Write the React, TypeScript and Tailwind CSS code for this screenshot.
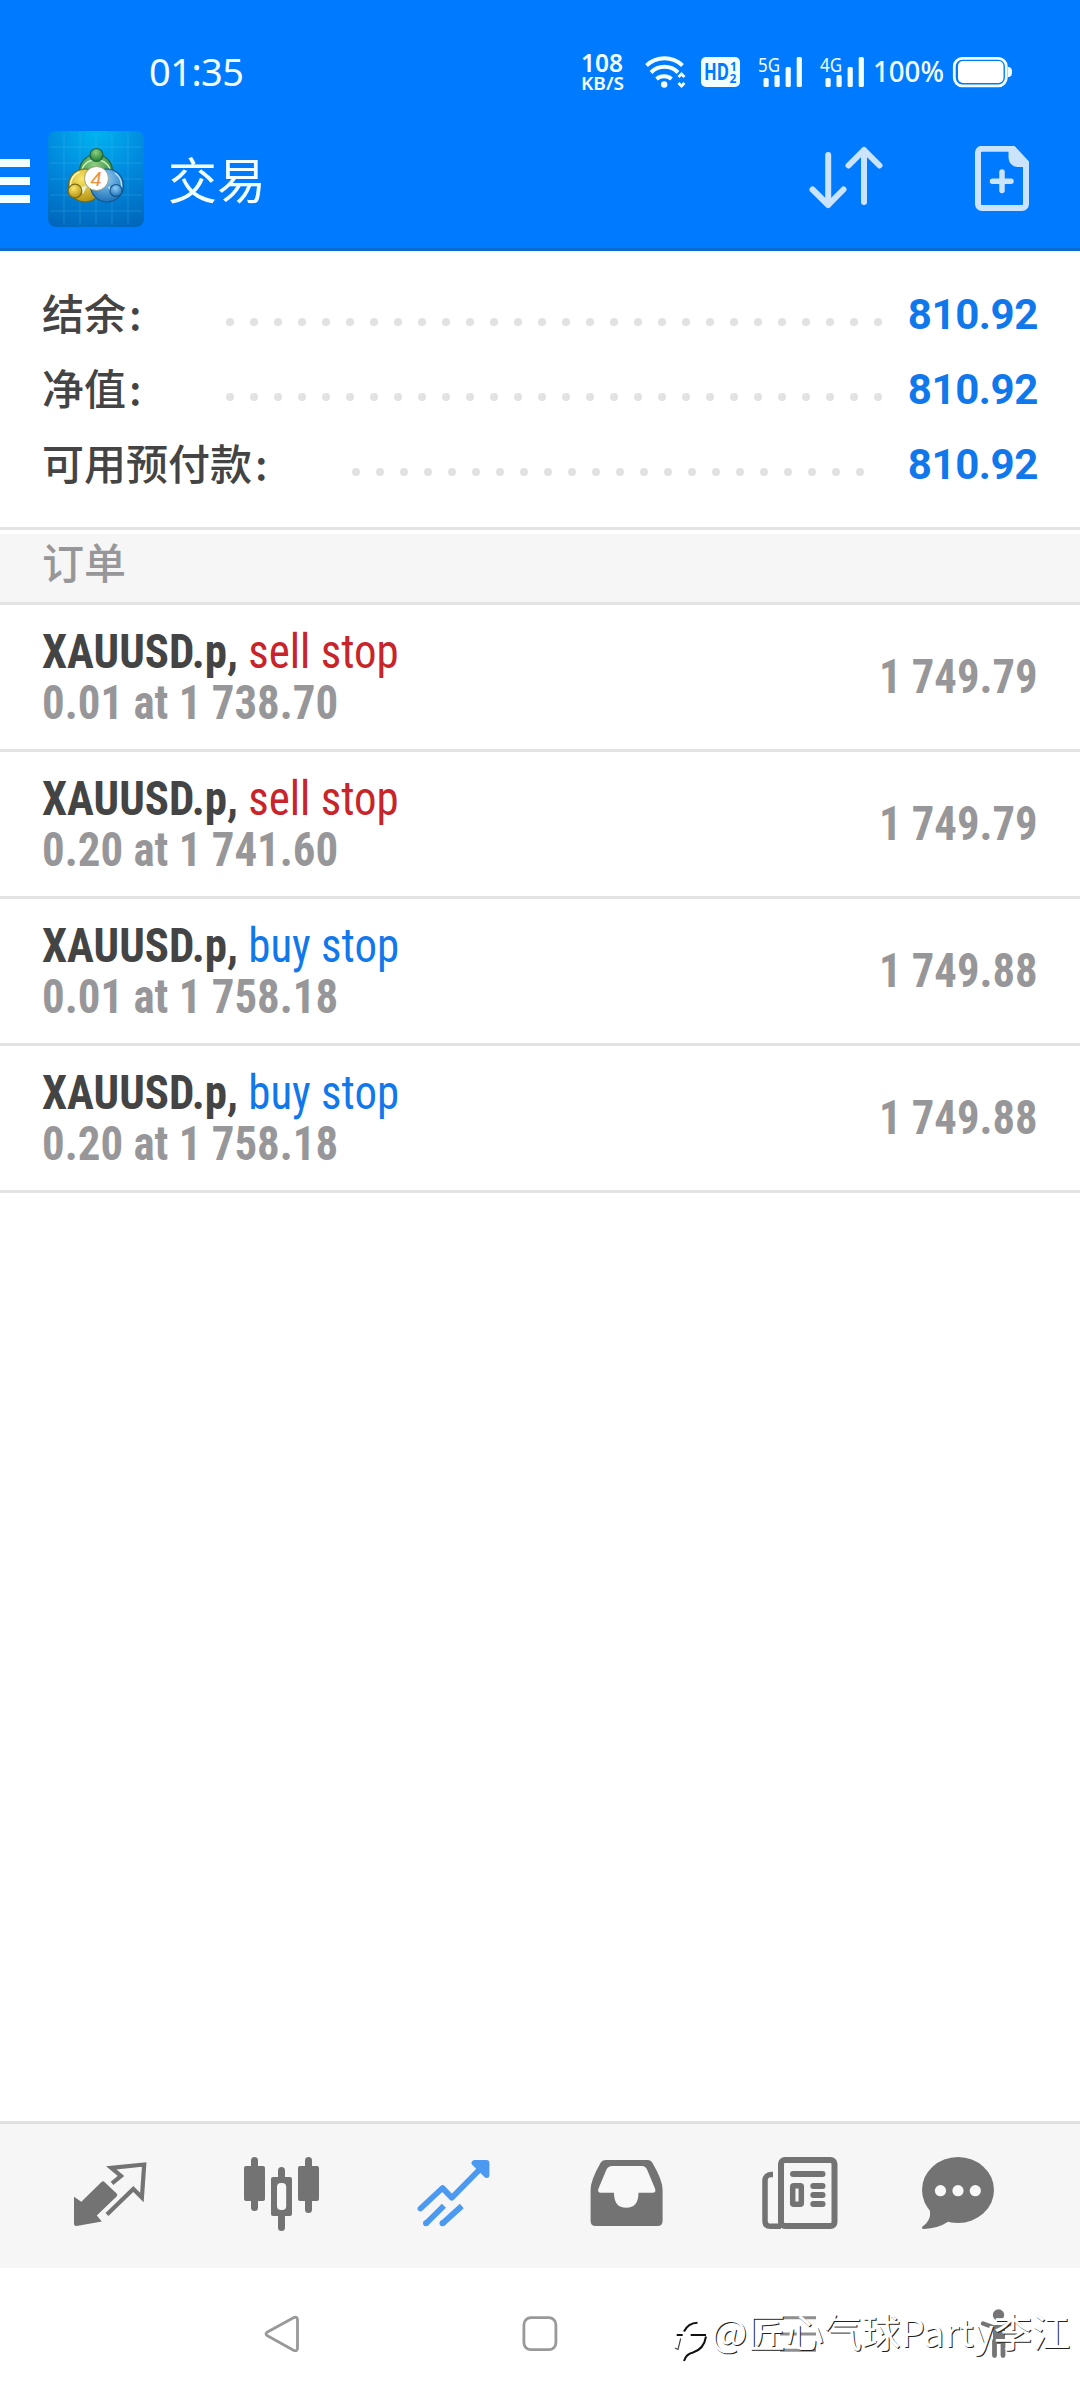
const summary = [
  { label: "结余", value: "810.92", dots: 28 },
  { label: "净值", value: "810.92", dots: 28 },
  { label: "可用预付款", value: "810.92", dots: 22 },
];

const orders = [
  { symbol: "XAUUSD.p,", type: "sell stop", detail: "0.01 at 1 738.70", price: "1 749.79" },
  { symbol: "XAUUSD.p,", type: "sell stop", detail: "0.20 at 1 741.60", price: "1 749.79" },
  { symbol: "XAUUSD.p,", type: "buy stop", detail: "0.01 at 1 758.18", price: "1 749.88" },
  { symbol: "XAUUSD.p,", type: "buy stop", detail: "0.20 at 1 758.18", price: "1 749.88" },
];

function Signal({ label }: { label: string }) {
  return (
    <svg className="overflow-visible" width="46" height="32" viewBox="0 0 46 32" fill="#f2ffff">
      <text x="0" y="16" fontSize="20" textLength="22" lengthAdjust="spacingAndGlyphs">{label}</text>
      <rect x="5.5" y="22" width="5.2" height="9" rx="1.5" />
      <rect x="16.5" y="19" width="5.2" height="12" rx="1.5" />
      <rect x="27.6" y="11" width="5.2" height="20" rx="1.5" />
      <rect x="38.7" y="1" width="5.2" height="30" rx="1.5" />
    </svg>
  );
}

function StatusBar() {
  return (
    <div className="flex h-[116px] pt-[54px] text-[#f2ffff] font-['Noto_Sans',sans-serif]">
      <svg className="ml-[149px] overflow-visible" width="100" height="36" fill="#f2ffff">
        <text x="0" y="31.5" fontSize="38" textLength="95" lengthAdjust="spacing">01:35</text>
      </svg>
      <svg className="ml-[332px] overflow-visible" width="44" height="40" fill="#f2ffff">
        <text x="0" y="18" fontSize="25" fontWeight="600" textLength="42" lengthAdjust="spacingAndGlyphs">108</text>
        <text x="0" y="36" fontSize="18.5" fontWeight="600" textLength="43" lengthAdjust="spacingAndGlyphs">KB/S</text>
      </svg>
      <svg className="ml-[20px] mt-[2px]" width="42" height="34" viewBox="0 0 42 34" fill="none" stroke="#f2ffff" strokeWidth="4">
        <path d="M1.5 9.5a26 26 0 0 1 36 0M6 16.5a19 19 0 0 1 27 0M11.5 23a11.5 11.5 0 0 1 15 0" />
        <circle cx="19.2" cy="28.5" r="3.2" fill="#f2ffff" stroke="none" />
        <path d="M33.500 21l3-3 3 3M33.500 27l3 3 3-3" strokeWidth="2.800" />
      </svg>
      <svg className="ml-[14px] mt-[2px] overflow-visible" width="40" height="32" viewBox="0 0 40 32">
        <rect x="0" y="1" width="39" height="30" rx="5" fill="#f2ffff" />
        <g fill="#007aff" fontWeight="700">
          <text x="3" y="24" fontSize="22.5" textLength="25" lengthAdjust="spacingAndGlyphs">HD</text>
          <text x="29" y="14.5" fontSize="12">1</text>
          <text x="28.5" y="26.5" fontSize="12">2</text>
        </g>
      </svg>
      <div className="ml-[17px] mt-[2px]"><Signal label="5G" /></div>
      <div className="ml-[16px] mt-[2px]"><Signal label="4G" /></div>
      <svg className="ml-[7px] overflow-visible" width="73" height="36" fill="#f2ffff">
        <text x="0" y="27.5" fontSize="29" fontWeight="500" textLength="71" lengthAdjust="spacingAndGlyphs">100%</text>
      </svg>
      <svg className="ml-[6px] mt-[2px]" width="60" height="32" viewBox="0 0 60 32">
        <rect x="2.3" y="2.3" width="52" height="27.5" rx="8" fill="none" stroke="#f2ffff" strokeWidth="2.8" />
        <rect x="6" y="5" width="45.5" height="22" rx="5" fill="#fff" />
        <path d="M56 11c3 0 4 2 4 5s-1 5-4 5z" fill="#f2ffff" />
      </svg>
    </div>
  );
}

function AppLogo() {
  return (
    <svg width="96" height="96" viewBox="0 0 96 96">
      <defs>
        <radialGradient id="sky" cx=".5" cy="0" r="1.05">
          <stop offset="0" stopColor="#00b4f0" />
          <stop offset=".5" stopColor="#008ade" />
          <stop offset="1" stopColor="#0068bc" />
        </radialGradient>
        <radialGradient id="green" cx=".45" cy=".3" r=".7"><stop offset="0" stopColor="#8fcf80" /><stop offset="1" stopColor="#1f7d35" /></radialGradient>
        <radialGradient id="yellow" cx=".4" cy=".3" r=".7"><stop offset="0" stopColor="#fbe76a" /><stop offset="1" stopColor="#b59312" /></radialGradient>
        <radialGradient id="blue" cx=".45" cy=".3" r=".7"><stop offset="0" stopColor="#8ccdf7" /><stop offset="1" stopColor="#1f72b8" /></radialGradient>
      </defs>
      <rect width="96" height="96" rx="8" fill="url(#sky)" />
      <path d="M16 2v92M32 2v92M48 2v92M64 2v92M80 2v92M2 16h92M2 32h92M2 48h92M2 64h92M2 80h92" stroke="#5cc8f5" strokeWidth="1" opacity=".25" />
      <g strokeWidth="1.2">
        <circle cx="48" cy="40" r="16.5" fill="url(#green)" stroke="#1c6640" />
        <path d="M34 38a15 15 0 0 1 28 0" fill="none" stroke="#c9efc0" strokeWidth="1.5" />
        <circle cx="37" cy="54.5" r="16.5" fill="url(#yellow)" stroke="#5e6b2a" />
        <path d="M22.500 55a14 14 0 0 1 9-14" fill="none" stroke="#fff6b0" strokeWidth="1.500" />
        <circle cx="59" cy="54.5" r="16.5" fill="url(#blue)" stroke="#15568d" />
        <path d="M67 42a15 15 0 0 1 5 19" fill="none" stroke="#b6e2ff" strokeWidth="1.500" />
        <path d="M31 56l8-1-4 8zM60 56l7-1-4 7z" fill="#e9f2d0" />
        <circle cx="48.5" cy="24" r="6.5" fill="url(#green)" stroke="#1c6640" />
        <circle cx="27" cy="60" r="6.8" fill="url(#yellow)" stroke="#7d6a14" />
        <circle cx="68" cy="59.5" r="6" fill="url(#blue)" stroke="#15568d" />
      </g>
      <circle cx="48.5" cy="47.5" r="12" fill="#fff" stroke="#8c8f70" strokeWidth=".8" />
      <text x="48" y="54.5" fontSize="20" fill="#f0913c" textAnchor="middle" className="font-['Liberation_Sans',sans-serif] italic">4</text>
    </svg>
  );
}

function Header() {
  return (
    <header className="h-[251px] bg-[#007aff] border-b-[3px] border-[#0b6bcf]">
      <StatusBar />
      <div className="flex h-[130px] items-center">
        <div className="flex flex-col gap-[10px]">
          <div className="w-[30px] h-2 bg-[#f2ffff]"></div>
          <div className="w-[30px] h-2 bg-[#f2ffff]"></div>
          <div className="w-[30px] h-2 bg-[#f2ffff]"></div>
        </div>
        <div className="ml-[18px] -mt-1"><AppLogo /></div>
        <p className="ml-6 mb-[7px] text-[49px] leading-none text-[#f2ffff]">交易</p>
        <svg className="ml-auto" width="80" height="70" viewBox="0 0 80 70" fill="none" stroke="#cce4fb" strokeWidth="6" strokeLinecap="round" strokeLinejoin="round">
          <path d="M22.2 9v50M6.5 43.500l15.700 15.500L37.500 43.500" />
          <path d="M58 56V4M42.5 19.500L58 4l15.500 15.500" />
        </svg>
        <svg className="ml-[88px] mr-[50px]" width="56" height="70" viewBox="0 0 56 70" fill="none" stroke="#cce4fb" strokeWidth="6">
          <path d="M8 2.700h31l13 14V58a4 4 0 0 1-4 4H8a4 4 0 0 1-4-4V6.700a4 4 0 0 1 4-4z" />
          <path d="M34.500 2h6l13 14v5h-9c-6 0-10-4-10-10z" fill="#cce4fb" stroke="none" />
          <path d="M28 26v18.500M18.500 35.300h18.500" strokeWidth="5.500" strokeLinecap="round" />
        </svg>
      </div>
    </header>
  );
}

function Summary() {
  return (
    <div className="h-[276px] pt-[26px] pl-[42px] pr-[42px]">
      {summary.map((item) => (
        <div key={item.label} className="flex h-[75px] items-center text-[42px] leading-none">
          <p className="mb-[6px] font-medium text-[#444]">{item.label}<span className="ml-[3px]">:</span></p>
          <div className="flex gap-4 mt-[14px] ml-[84px]">
            {Array.from({ length: item.dots }).map((_, i) => (
              <div key={i} className="size-2 rounded-full bg-[#e2e2e2]"></div>
            ))}
          </div>
          <p className="ml-auto font-['Roboto',sans-serif] font-bold tracking-[-0.4px] text-[#1178ec]">{item.value}</p>
        </div>
      ))}
    </div>
  );
}

function OrderRow({ order }: { order: (typeof orders)[number] }) {
  return (
    <div className="flex h-[147px] items-center justify-between pl-[42px] pr-[42px] border-b-[3px] border-[#e3e3e3] font-['Roboto_Condensed','Roboto',sans-serif] [font-stretch:75%] text-[48px] font-bold text-[#97979a]">
      <div className="leading-[51px] origin-left scale-x-[.935]">
        <p className="text-[#444]">
          {order.symbol}{" "}
          <span className={order.type === "sell stop" ? "font-normal text-[#c8242a]" : "font-normal text-[#1178ec]"}>{order.type}</span>
        </p>
        <p>{order.detail}</p>
      </div>
      <p className="origin-right scale-x-[.93]">{order.price}</p>
    </div>
  );
}

function TabBar() {
  return (
    <div className="flex h-[147px] items-center bg-[#f6f6f6] border-t-[3px] border-[#e0e0e0] pl-6 text-[#737373]">
      <div className="flex w-[172px] justify-center">
        <svg width="84" height="84" viewBox="0 0 84 84" fill="currentColor">
          <path d="M6 42.700l7.300 5L33.500 28q1.500-1.500 3 0L48.600 39.500q1.500 1.500 0 3L28.800 61.500l5 6L8.500 72Q6 72 6 69.500z" />
          <path d="M44 29.300l9-7.300-9.800-8.200 33-3.300-2.300 33-8.600-8.500L39 60.500" fill="none" stroke="currentColor" strokeWidth="4.200" />
        </svg>
      </div>
      <div className="flex w-[172px] justify-center">
        <svg width="84" height="84" viewBox="0 0 84 84" fill="currentColor">
          <rect x="4" y="12" width="21" height="35" rx="2" />
          <rect x="11" y="3" width="7" height="54" rx="3.5" />
          <rect x="58" y="12" width="21" height="35" rx="2" />
          <rect x="65" y="3" width="7" height="56" rx="3.5" />
          <rect x="38" y="13" width="7" height="64" rx="3.5" />
          <rect x="31" y="23" width="21" height="39" rx="2" />
          <rect x="37" y="29" width="9.2" height="27" rx="4" fill="#f8f8f8" />
        </svg>
      </div>
      <div className="flex w-[172px] justify-center text-[#4c99f2]">
        <svg width="84" height="84" viewBox="0 0 84 84" fill="none" stroke="currentColor" strokeWidth="5.8" strokeLinejoin="round">
          <path d="M8.5 54.500L30.500 34l9.300 9.700L73 10" strokeLinecap="round" />
          <path d="M62.500 9H74.500V21z" fill="currentColor" strokeLinecap="round" />
          <path d="M14 69.500L31.900 51.700M30.500 69.500L49.800 52" />
          <circle cx="14" cy="69.2" r="3" fill="currentColor" stroke="none" />
          <circle cx="30.5" cy="69.2" r="3" fill="currentColor" stroke="none" />
        </svg>
      </div>
      <div className="flex w-[172px] justify-center">
        <svg width="84" height="84" viewBox="0 0 84 84" fill="currentColor">
          <path d="M22 6h41.500q3.500 0 5 3Q78.600 26 78.600 36v31q0 5-5 5h-62q-5 0-5-5V36q0-10 9.900-27 1.500-3 5.500-3z" />
          <path d="M28.500 12H58q3.500 0 5 3.500l8 19q1.500 4.200-2.500 4.200H54.500q0 15-12.300 15T30 38.700H17q-4 0-2.500-4.200l8-19Q24 12 28.500 12z" fill="#f8f8f8" />
        </svg>
      </div>
      <div className="flex w-[172px] justify-center">
        <svg width="84" height="84" viewBox="0 0 84 84" fill="currentColor">
          <rect x="25" y="6" width="53.5" height="66" rx="4" fill="none" stroke="currentColor" strokeWidth="6" />
          <path d="M17 20.500h-2a6 6 0 0 0-6 6V67q0 5.300 5.500 5.300H25" fill="none" stroke="currentColor" strokeWidth="5.5" />
          <rect x="34" y="17" width="35.5" height="6" rx="3" />
          <rect x="36.7" y="31.7" width="8.6" height="18.6" rx="1" fill="none" stroke="currentColor" strokeWidth="5.5" />
          <rect x="54.3" y="29" width="15.2" height="6" rx="3" />
          <rect x="54.3" y="38" width="15.2" height="6" rx="3" />
          <rect x="54.3" y="47" width="15.2" height="6" rx="3" />
        </svg>
      </div>
      <div className="flex w-[148px] justify-center">
        <svg width="84" height="84" viewBox="0 0 84 84" fill="currentColor">
          <ellipse cx="42" cy="36" rx="36" ry="33" />
          <path d="M13 54q4 11-6.500 18.500-1.500 2.500 1.500 2.500 14-.5 24.500-7.500z" />
          <g fill="#f8f8f8">
            <circle cx="24.5" cy="36.7" r="5.6" />
            <circle cx="42" cy="36.7" r="5.6" />
            <circle cx="59.3" cy="36.7" r="5.6" />
          </g>
        </svg>
      </div>
    </div>
  );
}

function SystemNav() {
  return (
    <div className="relative flex h-[132px] items-center pl-[262px]">
      <svg width="40" height="40" viewBox="0 0 40 40" fill="none" stroke="#999" strokeWidth="2.8" strokeLinejoin="round">
        <path d="M5 18.300L31.500 3.700q4-1.500 4 2v28.500q0 3.500-4 2L5 21.500q-2-1.700 0-3.200z" />
      </svg>
      <svg className="ml-[218px]" width="40" height="40" viewBox="0 0 40 40" fill="none" stroke="#999" strokeWidth="2.8">
        <rect x="3.9" y="3.7" width="32" height="32" rx="7" />
      </svg>
      <svg className="ml-[218px]" width="40" height="40" viewBox="0 0 40 40" stroke="#8f8f8f" strokeWidth="3">
        <path d="M2 3.700h36M2 20h36M2 36.300h36" />
      </svg>
      <svg className="ml-[160px]" width="40" height="50" viewBox="0 0 40 50" fill="none" stroke="#757575" strokeLinecap="round" strokeLinejoin="round">
        <circle cx="20.5" cy="6" r="5.7" fill="#757575" stroke="none" />
        <path d="M5 14.500l11 4h8l11-5" strokeWidth="4.5" />
        <path d="M17 18h8v15h-8z" fill="#757575" strokeWidth="4" />
        <path d="M16.500 32v14.500M25 32v14.500" strokeWidth="4.8" />
      </svg>
      {/* Watermark lies over the navigation keys */}
      <div className="absolute left-[673px] top-[30px] flex items-start text-white">
        <svg className="mt-5" width="38" height="48" viewBox="0 0 38 48" fill="none">
          <path d="M3.700 17H9.700M17.700 17H33" stroke="#111" strokeWidth="2" />
          <path d="M11 13.500Q15 5 24.500 4.700" stroke="#111" strokeWidth="2" />
          <path d="M33 18.500Q31 31 20 34.500 13 36 11 43" stroke="#111" strokeWidth="2" />
          <path d="M7.700 20.500L5 31.500 2 30" stroke="#444" strokeWidth="1.200" />
        </svg>
        <p className="mt-[9px] text-[38.3px] leading-[48px] whitespace-nowrap [text-shadow:1px_1px_0_#222]">@匠心气球Party李江</p>
      </div>
    </div>
  );
}

function App() {
  return (
    <div className="flex flex-col w-[1080px] h-[2400px] overflow-hidden bg-white font-['Noto_Sans_CJK_SC',sans-serif]">
      <Header />
      <Summary />
      <div className="border-y-[3px] border-[#e3e3e3] h-[78px] pt-1">
        <p className="h-[68px] bg-[#f6f6f7] pl-[42px] text-[42px] leading-[53px] font-medium text-[#97979a]">订单</p>
      </div>
      {orders.map((order, index) => (
        <OrderRow key={index} order={order} />
      ))}
      <div className="flex-1"></div>
      <TabBar />
      <SystemNav />
    </div>
  );
}

export default App;
